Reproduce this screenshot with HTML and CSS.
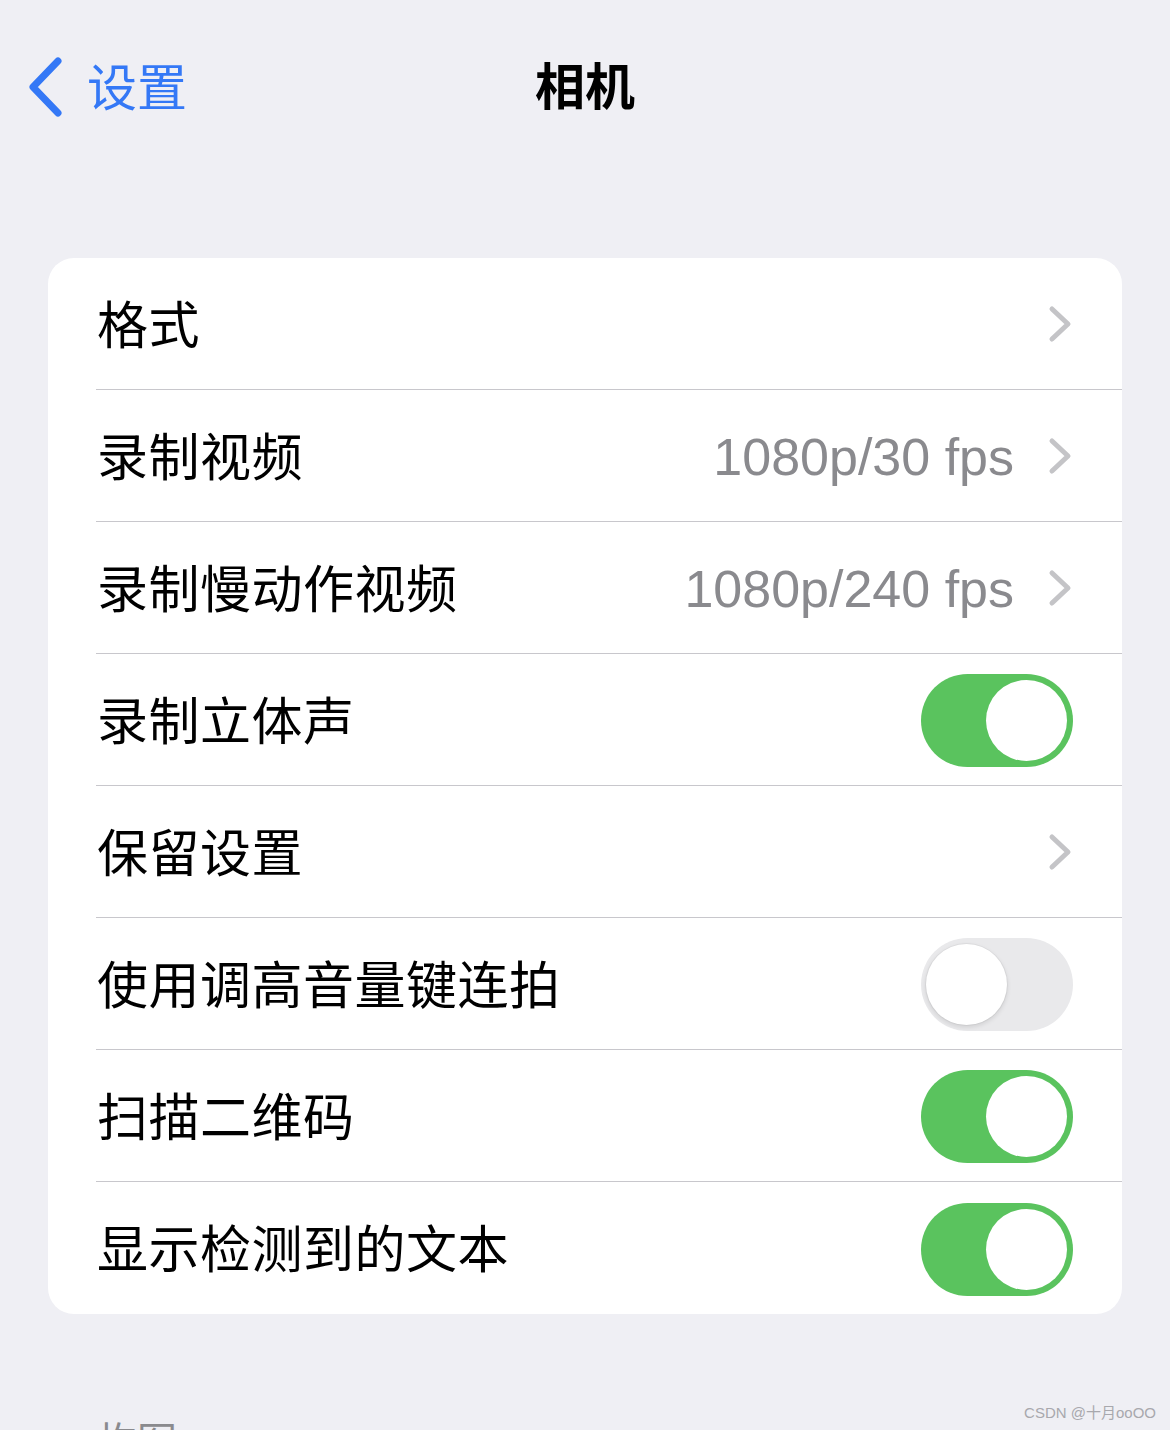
FILE: index.html
```html
<!DOCTYPE html>
<html lang="zh-CN">
<head>
  <meta charset="UTF-8" />
  <meta name="viewport" content="width=device-width, initial-scale=1.0"/>
  <title>相机</title>
  <link rel="stylesheet" href="styles.css">
</head>
<body>
  <div class="nav">
    <a class="back" href="#">
      <svg class="back-icon" width="36" height="60" viewBox="0 0 36 60">
        <path d="M31 4 L6 30 L31 56" fill="none" stroke="#3478f6" stroke-width="7" stroke-linecap="round" stroke-linejoin="round"/>
      </svg>
      <span>设置</span>
    </a>
    <h1 class="title">相机</h1>
  </div>

  <div class="group">
    <div class="row">
      <div class="row-body">
        <span class="label">格式</span>
        <span class="chev"><svg width="24" height="38" viewBox="0 0 24 38"><path d="M4 4 L20 19 L4 34" fill="none" stroke="#c4c4c7" stroke-width="5" stroke-linecap="round" stroke-linejoin="round"/></svg></span>
      </div>
    </div>
    <div class="row">
      <div class="row-body">
        <span class="label">录制视频</span>
        <span class="value">1080p/30 fps</span>
        <span class="chev"><svg width="24" height="38" viewBox="0 0 24 38"><path d="M4 4 L20 19 L4 34" fill="none" stroke="#c4c4c7" stroke-width="5" stroke-linecap="round" stroke-linejoin="round"/></svg></span>
      </div>
    </div>
    <div class="row">
      <div class="row-body">
        <span class="label">录制慢动作视频</span>
        <span class="value">1080p/240 fps</span>
        <span class="chev"><svg width="24" height="38" viewBox="0 0 24 38"><path d="M4 4 L20 19 L4 34" fill="none" stroke="#c4c4c7" stroke-width="5" stroke-linecap="round" stroke-linejoin="round"/></svg></span>
      </div>
    </div>
    <div class="row">
      <div class="row-body">
        <span class="label">录制立体声</span>
        <span class="toggle on"><span class="knob"></span></span>
      </div>
    </div>
    <div class="row">
      <div class="row-body">
        <span class="label">保留设置</span>
        <span class="chev"><svg width="24" height="38" viewBox="0 0 24 38"><path d="M4 4 L20 19 L4 34" fill="none" stroke="#c4c4c7" stroke-width="5" stroke-linecap="round" stroke-linejoin="round"/></svg></span>
      </div>
    </div>
    <div class="row">
      <div class="row-body">
        <span class="label">使用调高音量键连拍</span>
        <span class="toggle"><span class="knob"></span></span>
      </div>
    </div>
    <div class="row">
      <div class="row-body">
        <span class="label">扫描二维码</span>
        <span class="toggle on"><span class="knob"></span></span>
      </div>
    </div>
    <div class="row">
      <div class="row-body">
        <span class="label">显示检测到的文本</span>
        <span class="toggle on"><span class="knob"></span></span>
      </div>
    </div>
  </div>

  <div class="section-title">构图</div>

  <div class="watermark">CSDN @十月ooOO</div>
</body>
</html>
```

FILE: styles.css
```css
html, body {
  height: 100%;
}

body {
  margin: 0;
  background: #efeff4;
  font-family: "Liberation Sans", "Noto Sans CJK SC", sans-serif;
  color: #000;
  overflow: hidden;
  position: relative;
}

.nav {
  position: relative;
  height: 176px;
  display: flex;
  align-items: center;
  justify-content: center;
}

.back {
  position: absolute;
  left: 27px;
  top: 56px;
  display: flex;
  align-items: center;
  gap: 24px;
  color: #3478f6;
  text-decoration: none;
  font-size: 50px;
  font-family: "Noto Sans CJK SC", sans-serif;
}

.back-icon {
  display: block;
  margin-top: -2px;
}

.back span {
  margin-top: -8px;
}

.title {
  margin: 0;
  font-size: 50px;
  font-weight: bold;
  font-family: "Noto Sans CJK SC", sans-serif;
  margin-top: -10px;
}

.group {
  margin: 82px 48px 0;
  background: #fff;
  border-radius: 26px;
  overflow: hidden;
}

.row {
  padding-left: 48px;
  height: 132px;
}

.row-body {
  height: 131px;
  display: flex;
  align-items: center;
  padding-right: 48px;
  border-bottom: 1px solid #c8c7cc;
}

.row:last-child .row-body {
  border-bottom: none;
  height: 132px;
}

.label {
  flex: 1;
  font-size: 51px;
  letter-spacing: 0.5px;
  font-family: "Noto Sans CJK SC", sans-serif;
  padding-left: 1px;
  margin-top: -4px;
}

.value {
  font-size: 52px;
  color: #8a8a8e;
  margin-right: 34px;
  padding-top: 2px;
}

.chev {
  display: flex;
  margin-right: 2px;
}

.toggle {
  position: relative;
  width: 152px;
  height: 93px;
  border-radius: 47px;
  background: #e9e9eb;
  margin-right: 1px;
  margin-top: 2px;
}

.toggle.on {
  background: #5ac35e;
}

.knob {
  position: absolute;
  top: 6px;
  left: 5px;
  width: 81px;
  height: 81px;
  border-radius: 50%;
  background: #fff;
  box-shadow: 0 2px 5px rgba(0, 0, 0, 0.12), 0 0 0 1px rgba(0, 0, 0, 0.04);
}

.toggle.on .knob {
  left: auto;
  right: 6px;
  box-shadow: none;
}

.section-title {
  margin-top: 96px;
  padding-left: 97px;
  font-size: 40px;
  color: #8a8a8e;
  font-family: "Noto Sans CJK SC", sans-serif;
}

.watermark {
  position: absolute;
  right: 14px;
  bottom: 8px;
  font-size: 15px;
  color: #a8a8ad;
  font-family: "Liberation Sans", "Noto Sans CJK SC", sans-serif;
}
```
